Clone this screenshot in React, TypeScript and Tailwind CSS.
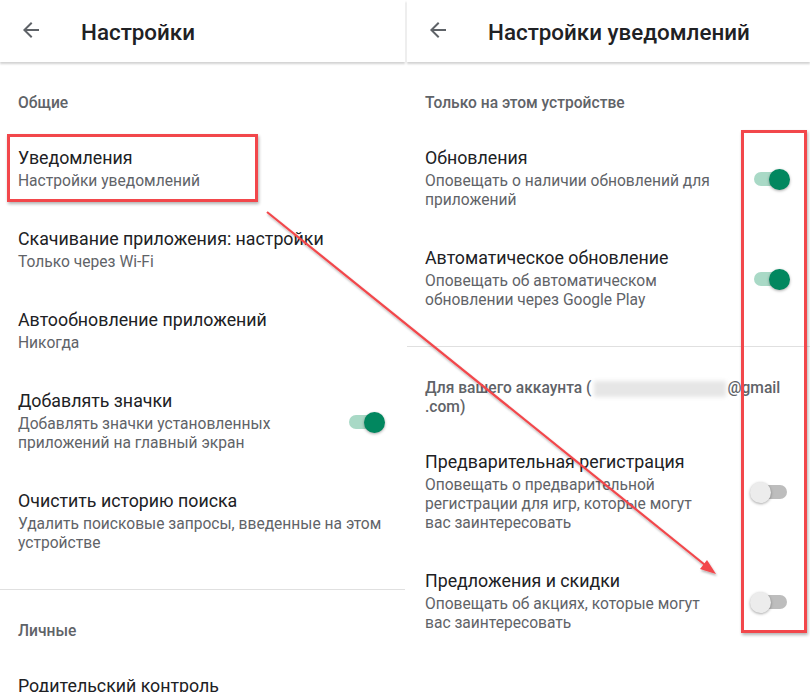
import React from 'react';

type Item = {
  title: string;
  sub: string[];
  toggle?: 'on' | 'off';
};

function Toggle({ on }: { on: boolean }) {
  return (
    <div className="relative w-[40px] h-[22px] shrink-0">
      <div
        className={`absolute left-[4px] top-[4px] w-[33px] h-[14px] rounded-full ${on ? 'bg-[#a9d9c6]' : 'bg-[#bdbdbd]'}`}
      />
      <div
        className={`absolute top-[1px] w-[21px] h-[21px] rounded-full shadow-[0_1px_3px_rgba(0,0,0,0.35)] ${on ? 'right-0 bg-[#01875f]' : 'left-0 bg-[#ececec]'}`}
      />
    </div>
  );
}

function Row({ item }: { item: Item }) {
  return (
    <div className="flex items-center pl-[18px] pr-[20px] pt-[21px] pb-[16px]">
      <div className="flex-1 min-w-0">
        <div className="text-[17.8px] leading-[22px] text-[#202124]">{item.title}</div>
        <div className="mt-[3px]">
          {item.sub.map((s) => (
            <div key={s} className="text-[15.6px] leading-[19px] text-[#5f6368]">
              {s}
            </div>
          ))}
        </div>
      </div>
      {item.toggle && <Toggle on={item.toggle === 'on'} />}
    </div>
  );
}

function Header({ title }: { title: string }) {
  return (
    <div className="h-[62px] flex items-center shadow-[0_2px_2px_rgba(0,0,0,0.18)] relative z-10 bg-white">
      <svg width="24" height="24" viewBox="0 0 24 24" className="ml-[19px] mb-[2px]">
        <path d="M20 11H7.83l5.59-5.59L12 4l-8 8 8 8 1.41-1.41L7.83 13H20v-2z" fill="#5f6368" />
      </svg>
      <div className="ml-[38px] mt-[3px] text-[22.4px] font-medium text-[#202124]">{title}</div>
    </div>
  );
}

function Label({ children }: { children: React.ReactNode }) {
  return (
    <div className="px-[18px] text-[15.6px] leading-[19px] font-medium text-[#5f6368] pt-[32px] pb-[13px]">
      {children}
    </div>
  );
}

const leftTop: Item[] = [
  { title: 'Уведомления', sub: ['Настройки уведомлений'] },
  { title: 'Скачивание приложения: настройки', sub: ['Только через Wi-Fi'] },
  { title: 'Автообновление приложений', sub: ['Никогда'] },
  { title: 'Добавлять значки', sub: ['Добавлять значки установленных', 'приложений на главный экран'], toggle: 'on' },
  { title: 'Очистить историю поиска', sub: ['Удалить поисковые запросы, введенные на этом', 'устройстве'] },
];

const rightTop: Item[] = [
  { title: 'Обновления', sub: ['Оповещать о наличии обновлений для', 'приложений'], toggle: 'on' },
  { title: 'Автоматическое обновление', sub: ['Оповещать об автоматическом', 'обновлении через Google Play'], toggle: 'on' },
];

const rightBottom: Item[] = [
  {
    title: 'Предварительная регистрация',
    sub: ['Оповещать о предварительной', 'регистрации для игр, которые могут', 'вас заинтересовать'],
    toggle: 'off',
  },
  { title: 'Предложения и скидки', sub: ['Оповещать об акциях, которые могут', 'вас заинтересовать'], toggle: 'off' },
];

export default function App() {
  return (
    <div
      className="relative w-[810px] h-[692px] overflow-hidden bg-white flex gap-[2px]"
      style={{ fontFamily: 'Roboto, "Noto Sans", sans-serif' }}
    >
      {/* left screen */}
      <div className="w-[405px] shrink-0">
        <Header title="Настройки" />
        <Label>Общие</Label>
        {leftTop.map((it) => (
          <Row key={it.title} item={it} />
        ))}
        <div className="mt-[20px] h-px bg-[#e0e0e0]" />
        <Label>Личные</Label>
        <Row item={{ title: 'Родительский контроль', sub: ['Выключен'] }} />
      </div>

      {/* right screen */}
      <div className="flex-1 min-w-0">
        <Header title="Настройки уведомлений" />
        <Label>Только на этом устройстве</Label>
        {rightTop.map((it) => (
          <Row key={it.title} item={it} />
        ))}
        <div className="mt-[20px] h-px bg-[#e0e0e0]" />
        <Label>
          <div className="flex items-center whitespace-nowrap">
            <span>Для вашего аккаунта (</span>
            <span className="inline-block shrink-0 w-[132px] h-[16px] bg-[#e6e6e6] blur-[2px] mx-[2px]" />
            <span>@gmail</span>
          </div>
          <div>.com)</div>
        </Label>
        {rightBottom.map((it) => (
          <Row key={it.title} item={it} />
        ))}
      </div>

      {/* red annotations */}
      <div className="absolute left-[7px] top-[134px] w-[251px] h-[68px] border-[3px] border-[#f2474b] shadow-[1px_2px_3px_rgba(0,0,0,0.3)] pointer-events-none" />
      <div className="absolute left-[741px] top-[130px] w-[66px] h-[503px] border-[3px] border-[#f2474b] shadow-[1px_2px_3px_rgba(0,0,0,0.3)] pointer-events-none" />
      <svg className="absolute left-0 top-0 pointer-events-none" width="810" height="692">
        <defs>
          <filter id="sh" x="-10%" y="-10%" width="120%" height="120%">
            <feDropShadow dx="1" dy="2" stdDeviation="1" floodColor="#000" floodOpacity="0.3" />
          </filter>
        </defs>
        <g filter="url(#sh)">
          <line x1="267" y1="212" x2="710" y2="569" stroke="#f2474b" strokeWidth="2.2" />
          <path d="M716 574 L700 569 L707 560 Z" fill="#f2474b" />
        </g>
      </svg>
    </div>
  );
}
